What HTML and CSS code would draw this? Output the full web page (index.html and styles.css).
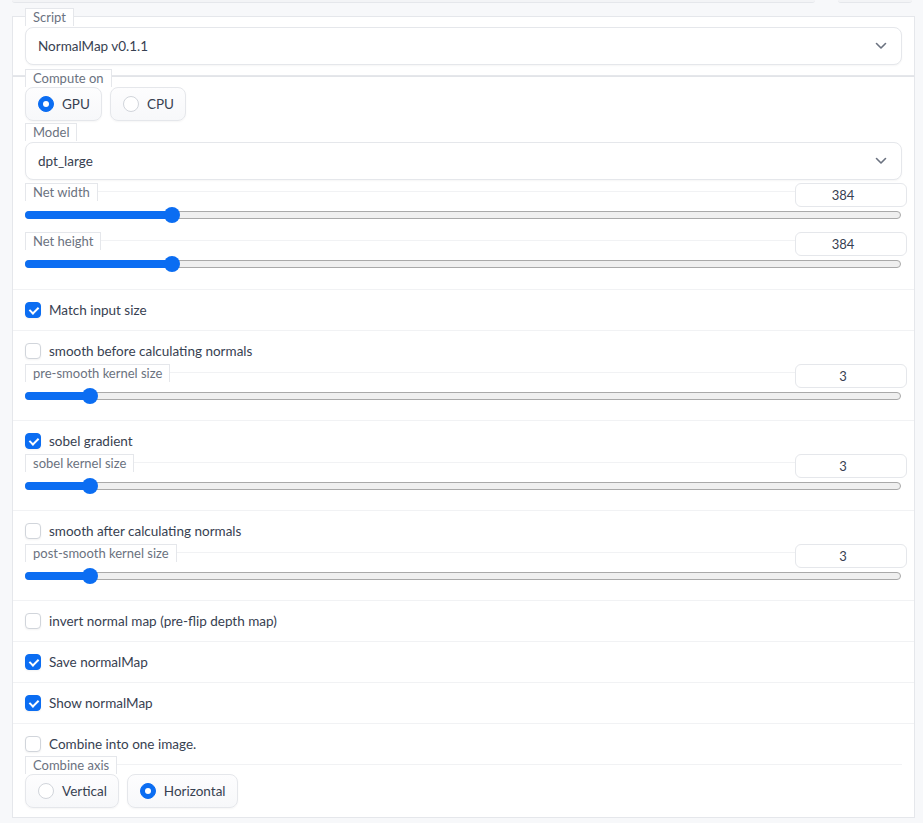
FILE: index.html
```html
<!DOCTYPE html>
<html>
<head>
<meta charset="utf-8">
<link rel="stylesheet" href="styles.css">
</head>
<body>
<div class="topbar"><div class="tb tb1"></div><div class="tb tb2"></div></div>

<div class="script-box">
  <div class="lbl lbl-top">Script</div>
  <div class="dropdown">
    <span>NormalMap v0.1.1</span>
    <svg class="chev" width="12" height="8" viewBox="0 0 12 8"><path d="M1.5 1.5 L6 6 L10.5 1.5" fill="none" stroke="#6b7280" stroke-width="1.6" stroke-linecap="round" stroke-linejoin="round"/></svg>
  </div>
</div>

<div class="panel">
  <div class="row row-first">
    <div class="lbl lbl-top">Compute on</div>
    <div class="radios">
      <label class="radio-btn"><span class="radio on"></span>GPU</label>
      <label class="radio-btn"><span class="radio"></span>CPU</label>
    </div>

    <div class="field f-model">
      <div class="head"><div class="lbl">Model</div></div>
      <div class="dropdown">
        <span>dpt_large</span>
        <svg class="chev" width="12" height="8" viewBox="0 0 12 8"><path d="M1.5 1.5 L6 6 L10.5 1.5" fill="none" stroke="#6b7280" stroke-width="1.6" stroke-linecap="round" stroke-linejoin="round"/></svg>
      </div>
    </div>

    <div class="field slider-field f-first">
      <div class="head"><div class="lbl">Net width</div><div class="num">384</div></div>
      <div class="track" style="--p:0.1616"><div class="fill"></div><div class="thumb"></div></div>
    </div>
    <div class="field slider-field">
      <div class="head"><div class="lbl">Net height</div><div class="num">384</div></div>
      <div class="track" style="--p:0.1616"><div class="fill"></div><div class="thumb"></div></div>
    </div>
  </div>

  <div class="row">
    <label class="cb-line"><span class="cb on"></span>Match input size</label>
  </div>

  <div class="row row-slider">
    <label class="cb-line"><span class="cb"></span>smooth before calculating normals</label>
    <div class="field slider-field f-sub">
      <div class="head"><div class="lbl">pre-smooth kernel size</div><div class="num">3</div></div>
      <div class="track" style="--p:0.0663"><div class="fill"></div><div class="thumb"></div></div>
    </div>
  </div>

  <div class="row row-slider">
    <label class="cb-line"><span class="cb on"></span>sobel gradient</label>
    <div class="field slider-field f-sub">
      <div class="head"><div class="lbl">sobel kernel size</div><div class="num">3</div></div>
      <div class="track" style="--p:0.0663"><div class="fill"></div><div class="thumb"></div></div>
    </div>
  </div>

  <div class="row row-slider">
    <label class="cb-line"><span class="cb"></span>smooth after calculating normals</label>
    <div class="field slider-field f-sub">
      <div class="head"><div class="lbl">post-smooth kernel size</div><div class="num">3</div></div>
      <div class="track" style="--p:0.0663"><div class="fill"></div><div class="thumb"></div></div>
    </div>
  </div>

  <div class="row">
    <label class="cb-line"><span class="cb"></span>invert normal map (pre-flip depth map)</label>
  </div>
  <div class="row">
    <label class="cb-line"><span class="cb on"></span>Save normalMap</label>
  </div>
  <div class="row">
    <label class="cb-line"><span class="cb on"></span>Show normalMap</label>
  </div>

  <div class="row row-last">
    <label class="cb-line"><span class="cb"></span>Combine into one image.</label>
    <div class="field f-axis">
      <div class="head"><div class="lbl">Combine axis</div></div>
      <div class="radios">
        <label class="radio-btn"><span class="radio"></span>Vertical</label>
        <label class="radio-btn"><span class="radio on"></span>Horizontal</label>
      </div>
    </div>
  </div>
</div>
</body>
</html>
```

FILE: styles.css
```css
* { box-sizing: border-box; }
html, body { margin: 0; }
body {
  background: #f7f8fa;
  padding: 0 8px 0 12px;
  font-family: Lato, "Open Sans", sans-serif;
  color: #374151;
  font-size: 13.5px;
}

.topbar { display: flex; height: 3px; }
.tb {
  height: 3px;
  background: #f3f4f6;
  border-bottom: 1px solid #e5e7eb;
  border-radius: 0 0 6px 6px;
}
.tb1 { width: 803px; }
.tb2 { width: 74px; margin-left: 23px; }

.script-box {
  margin-top: 13px;
  background: #fff;
  border: 1px solid #e5e7eb;
  padding: 0 12px 10px;
}
.lbl {
  display: inline-block;
  height: 18px;
  border: 1px solid #e5e7eb;
  border-bottom: 0;
  padding: 0 7px;
  font-size: 13px;
  line-height: 17px;
  color: #6b7280;
  background: #fff;
  white-space: nowrap;
}
.lbl-top { display: block; width: max-content; margin-top: -9px; }
.panel .lbl-top { margin-top: -8px; }

.dropdown {
  display: flex;
  align-items: center;
  justify-content: space-between;
  height: 38px;
  margin-top: 1px;
  border: 1px solid #e5e7eb;
  border-radius: 8px;
  background: #fff;
  padding: 0 14px 0 12px;
  font-size: 13.5px;
  color: #374151;
  box-shadow: 0 1px 2px rgba(0,0,0,0.04);
}

.panel {
  background: #fff;
  border: 1px solid #e5e7eb;
  border-top-color: #e2e4e8;
  padding: 0 0 9px;
}

.row {
  border-top: 1px solid #f1f2f4;
  padding: 11px 12px 12px;
}
.row-first { border-top: 0; padding: 0 12px; }
.row-slider { padding-bottom: 0; }
.row-last { padding-bottom: 0; }

.radios { display: flex; gap: 8px; }
.radio-btn {
  display: flex;
  align-items: center;
  gap: 8px;
  height: 34px;
  padding: 0 11px 0 12px;
  border: 1px solid #e5e7eb;
  border-radius: 8px;
  background: linear-gradient(#fdfdfe, #f7f8fa);
  box-shadow: 0 1px 2px rgba(0,0,0,0.04);
  font-size: 13.5px;
  color: #374151;
}
.radio {
  width: 16px;
  height: 16px;
  border-radius: 50%;
  border: 1px solid #d1d5db;
  background: #fff;
  display: flex;
  align-items: center;
  justify-content: center;
}
.radio.on { background: #0b6df2; border-color: #0b6df2; }
.radio.on::after {
  content: "";
  width: 6px;
  height: 6px;
  border-radius: 50%;
  background: #fff;
}

.field { border-top: 1px solid #f1f2f4; }
.field .head {
  display: flex;
  justify-content: space-between;
  align-items: flex-start;
  margin-top: -9px;
}
.f-model { margin-top: 10px; border-top-color: transparent; }
.f-first { margin-top: 11px; }
.slider-field { padding-bottom: 21px; }
.f-sub { margin-top: 13px; padding-bottom: 20px; }
.f-axis { margin-top: 12px; }

.num {
  width: 112px;
  height: 24px;
  margin-right: -5px;
  padding-right: 16px;
  border: 1px solid #e5e7eb;
  border-radius: 6px;
  background: #fff;
  text-align: center;
  font-size: 13px;
  line-height: 22px;
  color: #374151;
}

.track {
  position: relative;
  margin-top: 4px;
  width: calc(100% - 1px);
  height: 8px;
  border: 1px solid #a9a9a9;
  border-radius: 4px;
  background: #efefef;
}
.fill {
  position: absolute;
  left: -1px;
  top: -1px;
  height: 8px;
  width: calc(8px + var(--p) * (100% - 16px));
  background: #0b6df2;
  border-radius: 4px;
}
.thumb {
  position: absolute;
  top: -5px;
  left: calc(8px + var(--p) * (100% - 16px) - 9px);
  width: 16px;
  height: 16px;
  border-radius: 50%;
  background: #0b6df2;
}

.cb-line {
  display: flex;
  align-items: center;
  gap: 8px;
  height: 17px;
  font-size: 13.5px;
  color: #374151;
}
.cb {
  width: 16px;
  height: 16px;
  border: 1px solid #d1d5db;
  border-radius: 4px;
  background: #fff;
  box-shadow: 0 1px 2px rgba(0,0,0,0.05);
  position: relative;
  flex: none;
}
.cb.on { background: #0b6df2; border-color: #0b6df2; }
.cb.on::after {
  content: "";
  position: absolute;
  left: 4.5px;
  top: 2.5px;
  width: 4px;
  height: 7px;
  border: solid #fff;
  border-width: 0 2px 2px 0;
  transform: rotate(45deg);
}
```
